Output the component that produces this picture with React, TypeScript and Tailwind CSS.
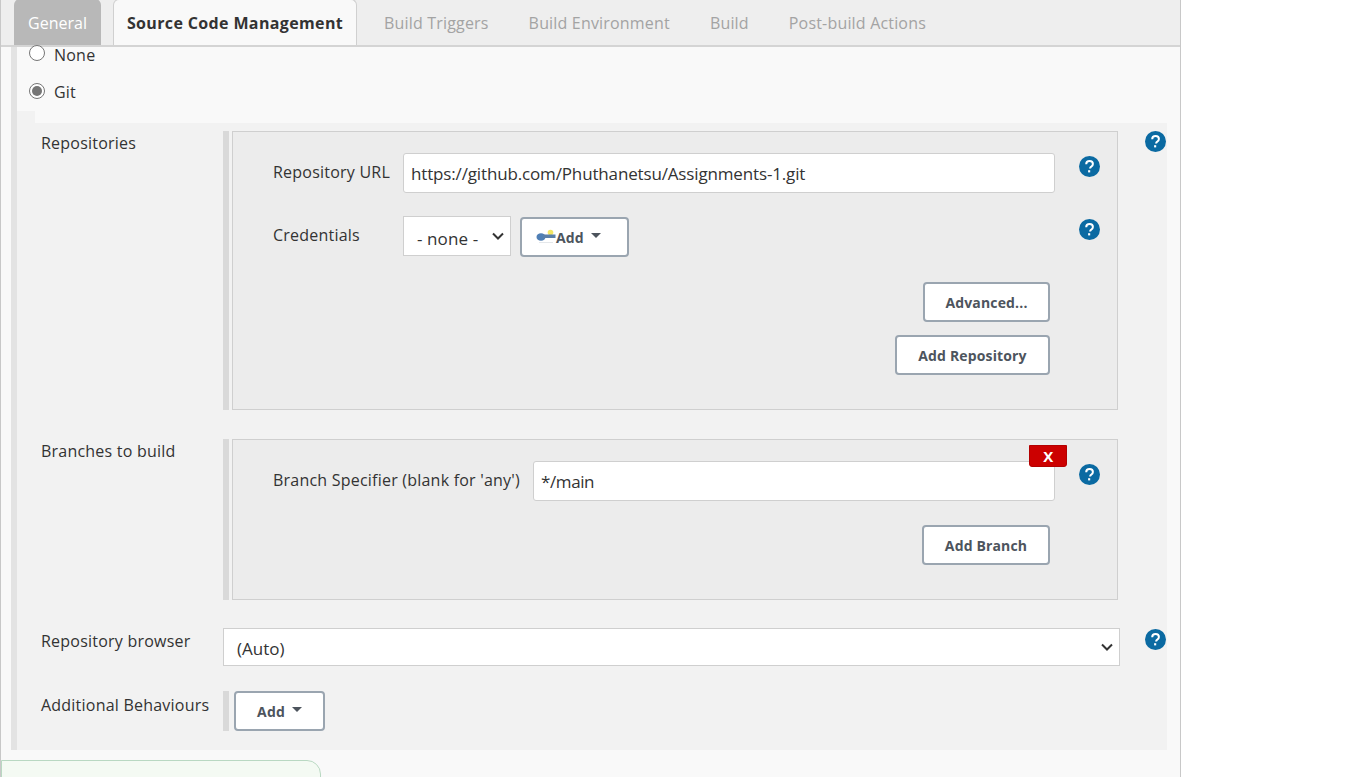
import React from "react"

const FONT = "[font-family:'Open_Sans','Noto_Sans',sans-serif]"

function HelpIcon() {
  return (
    <svg width="21" height="21" viewBox="0 0 21 21" className="shrink-0">
      <circle cx="10.5" cy="10.5" r="10.5" fill="#0b6aa2" />
      <path d="M7.2 8.2c0-2 1.5-3.2 3.4-3.2s3.3 1.1 3.3 2.9c0 1.4-.8 2.1-1.7 2.7-.8.5-1.1.9-1.1 1.8" fill="none" stroke="#fff" strokeWidth="2" />
      <rect x="9.1" y="14.2" width="2.1" height="2.2" fill="#fff" />
    </svg>
  )
}

function Button({ children, className }: { children: React.ReactNode; className: string }) {
  return (
    <button className={`h-10 shrink-0 flex items-center rounded border-2 border-[#9aa5b0] bg-white text-[14px] tracking-[0.15px] font-bold text-[#4d545d] ${className}`}>
      {children}
    </button>
  )
}

function Caret() {
  return <span className="ml-[7px] mb-[3px] w-0 h-0 border-x-[5px] border-x-transparent border-t-[5px] border-t-[#4d545d]" />
}

function Chevron() {
  return (
    <svg width="12" height="8" viewBox="0 0 12 8" className="shrink-0">
      <path d="M1 1.5l5 5 5-5" fill="none" stroke="#333" strokeWidth="2" />
    </svg>
  )
}

function KeyIcon() {
  return (
    <svg width="20" height="16" viewBox="0 0 20 16" className="shrink-0">
      <circle cx="14.5" cy="3.5" r="2.8" fill="#f5e663" />
      <ellipse cx="5" cy="8" rx="4.5" ry="3.8" fill="#4f7fb5" />
      <rect x="7" y="5.5" width="12.5" height="3.5" fill="#5b7fa8" />
      <rect x="3" y="13" width="14" height="1" fill="#e4e7ea" />
    </svg>
  )
}

function Handle({ className }: { className: string }) {
  return <div className={`w-[6px] shrink-0 bg-[#d9d9d9] ${className}`} />
}

function Tab({ label }: { label: string }) {
  return <div className="px-5 pt-[12px] text-[#a3a3a3] tracking-[0.18px] whitespace-nowrap">{label}</div>
}

function Radio({ checked }: { checked?: boolean }) {
  return (
    <span className="w-4 h-4 shrink-0 rounded-full bg-white border border-[#767676] flex items-center justify-center">
      {checked && <span className="w-[10px] h-[10px] rounded-full bg-[#767676]" />}
    </span>
  )
}

export default function App() {
  return (
    <div className={`flex h-[777px] w-full overflow-hidden bg-white tracking-[0.22px] text-[16px] text-[#333] ${FONT}`}>
      <div className="w-[1181px] h-full shrink-0 flex flex-col border-x border-[#c8c8c8] bg-[#f9f9f9]">
        {/* tab bar */}
        <div className="h-[47px] shrink-0 flex items-end pl-[13px] bg-[#eeeeee] border-b-2 border-[#d4d4d4]">
          <div className="h-[46px] w-[87px] rounded-t-md bg-[#b8b8b8] text-white text-center pt-[12px] tracking-normal">General</div>
          <div className="h-[46px] w-[244px] ml-3 rounded-t-md bg-[#f9f9f9] border border-b-0 border-[#d0d0d0] text-center pt-[11px] font-bold tracking-[0.36px] whitespace-nowrap">
            Source Code Management
          </div>
          <div className="flex h-[46px] ml-[7px]">
            <Tab label="Build Triggers" />
            <Tab label="Build Environment" />
            <Tab label="Build" />
            <Tab label="Post-build Actions" />
          </div>
        </div>

        <div className="ml-[10px] flex-1 min-h-0 flex flex-col">
          <div className="w-[1156px] h-[703px] border-l-[6px] border-[#e3e3e3]">
            {/* scm radios */}
            <div className="h-[64px] pl-[12px] flex flex-col">
              <div className="flex items-center gap-[9px] h-[16px] mt-[-2px]">
                <Radio />
                <span className="mt-[3px]">None</span>
              </div>
              <div className="flex items-center gap-[9px] h-[16px] mt-[22px]">
                <Radio checked />
                <span className="mt-[2px]">Git</span>
              </div>
            </div>
            <div className="w-[18px] h-[12px] bg-[#f2f2f2]" />

            {/* git section */}
            <div className="w-[1150px] h-[627px] bg-[#f2f2f2] pt-2 flex flex-col">
              {/* Repositories */}
              <div className="flex items-start">
                <div className="w-[206px] shrink-0 pl-[24px]">Repositories</div>
                <Handle className="h-[279px]" />
                <div className="w-[886px] h-[279px] shrink-0 ml-[3px] border border-[#cfcfcf] bg-[#ececec] pt-[21px]">
                  <div className="flex items-start">
                    <div className="w-[170px] pl-10 pt-[7px] shrink-0">Repository URL</div>
                    <div className="w-[652px] h-10 shrink-0 rounded-[3px] border border-[#cfcfcf] bg-white pl-[7px] pt-px flex items-center text-[17px] tracking-[-0.15px]">
                      https://github.com/Phuthanetsu/Assignments-1.git
                    </div>
                    <div className="ml-6 mt-[3px]"><HelpIcon /></div>
                  </div>
                  <div className="flex items-start mt-[23px]">
                    <div className="w-[170px] pl-10 pt-[7px] shrink-0">Credentials</div>
                    <div className="w-[108px] h-10 shrink-0 border border-[#cfcfcf] bg-white flex items-center justify-between pl-[13px] pr-[6px] text-[17px] tracking-[0.1px]">
                      <span className="mt-[5px]">- none -</span>
                      <Chevron />
                    </div>
                    <Button className="w-[109px] ml-[9px] mt-px pl-[14px]">
                      <KeyIcon />
                      <span>Add</span>
                      <Caret />
                    </Button>
                    <div className="ml-[450px] mt-[3px]"><HelpIcon /></div>
                  </div>
                  <div className="flex flex-col items-end w-[817px] mt-[25px] gap-[13px]">
                    <Button className="w-[127px] justify-center">Advanced...</Button>
                    <Button className="w-[155px] justify-center">Add Repository</Button>
                  </div>
                </div>
                <div className="ml-[27px]"><HelpIcon /></div>
              </div>

              {/* Branches */}
              <div className="flex items-start mt-[29px]">
                <div className="w-[206px] shrink-0 pl-[24px]">Branches to build</div>
                <Handle className="h-[161px]" />
                <div className="w-[886px] h-[161px] shrink-0 ml-[3px] border border-[#cfcfcf] bg-[#ececec] pt-[21px]">
                  <div className="flex items-start">
                    <div className="w-[300px] pl-10 pt-[7px] shrink-0 whitespace-nowrap">Branch Specifier (blank for 'any')</div>
                    <div className="relative w-[522px] h-10 shrink-0 rounded-[3px] border border-[#cfcfcf] bg-white pl-[7px] pt-px flex items-center text-[17px] tracking-[-0.4px]">
                      */main
                      <div className="absolute right-[-13px] top-[-17px] w-[38px] h-[22px] rounded-b-[3px] border border-[#b30000] bg-[#cc0000] text-white text-[15px] font-bold flex items-center justify-center">
                        X
                      </div>
                    </div>
                    <div className="ml-6 mt-[3px]"><HelpIcon /></div>
                  </div>
                  <div className="flex justify-end w-[817px] mt-6">
                    <Button className="w-[128px] justify-center">Add Branch</Button>
                  </div>
                </div>
              </div>

              {/* Repository browser */}
              <div className="flex items-start mt-[28px]">
                <div className="w-[206px] shrink-0 pl-[24px] mt-px">Repository browser</div>
                <div className="w-[897px] h-[38px] shrink-0 border border-[#cfcfcf] bg-white flex items-center justify-between pl-[13px] pr-[6px] text-[17px] tracking-normal">
                  <span className="mt-[3px]">(Auto)</span>
                  <Chevron />
                </div>
                <div className="ml-[25px] mt-px"><HelpIcon /></div>
              </div>

              {/* Additional Behaviours */}
              <div className="flex items-start mt-[25px]">
                <div className="w-[206px] shrink-0 pl-[24px] whitespace-nowrap mt-[2px]">Additional Behaviours</div>
                <Handle className="h-10" />
                <Button className="w-[91px] ml-[5px] justify-center">
                  <span>Add</span>
                  <Caret />
                </Button>
              </div>
            </div>
          </div>
        </div>
      </div>

      {/* bottom bar peeking in */}
      <div className="fixed left-px top-[760px] w-[320px] h-[40px] rounded-tr-[14px] border border-[#b9d8c2] bg-[#f4faf3]" />
    </div>
  )
}
